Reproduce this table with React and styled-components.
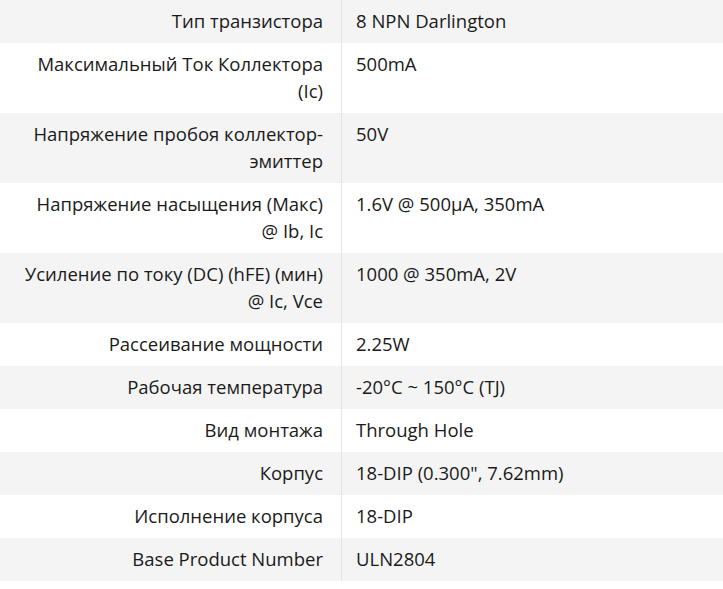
import React from "react";
import styled, { createGlobalStyle } from "styled-components";

const Global = createGlobalStyle`
  html, body { margin: 0; padding: 0; background: #fff; }
  body { font-family: "Open Sans", "Noto Sans", sans-serif; color: #1a1a1a; }
`;

const Table = styled.table`
  width: 723px;
  border-collapse: collapse;
  font-size: 18.5px;
  line-height: 27px;
`;

const Row = styled.tr`
  background: ${(p) => (p.$odd ? "#f4f4f4" : "#fff")};
`;

const Label = styled.td`
  width: 305px;
  padding: 7px 18px 9px 18px;
  text-align: right;
  vertical-align: top;
  white-space: pre-line;
  border-right: 1px solid #e4e4e4;
`;

const Value = styled.td`
  padding: 7px 14px 9px;
  text-align: left;
  vertical-align: top;
  white-space: nowrap;
`;

const specs = [
  ["Тип транзистора", "8 NPN Darlington"],
  ["Максимальный Ток Коллектора\n(Ic)", "500mA"],
  ["Напряжение пробоя коллектор-\nэмиттер", "50V"],
  ["Напряжение насыщения (Макс)\n@ Ib, Ic", "1.6V @ 500µA, 350mA"],
  ["Усиление по току (DC) (hFE) (мин)\n@ Ic, Vce", "1000 @ 350mA, 2V"],
  ["Рассеивание мощности", "2.25W"],
  ["Рабочая температура", "-20°C ~ 150°C (TJ)"],
  ["Вид монтажа", "Through Hole"],
  ["Корпус", "18-DIP (0.300\", 7.62mm)"],
  ["Исполнение корпуса", "18-DIP"],
  ["Base Product Number", "ULN2804"],
];

export default function App() {
  return (
    <>
      <Global />
      <Table>
        <tbody>
          {specs.map(([k, v], i) => (
            <Row key={k} $odd={i % 2 === 0}>
              <Label>{k}</Label>
              <Value>{v}</Value>
            </Row>
          ))}
        </tbody>
      </Table>
    </>
  );
}
